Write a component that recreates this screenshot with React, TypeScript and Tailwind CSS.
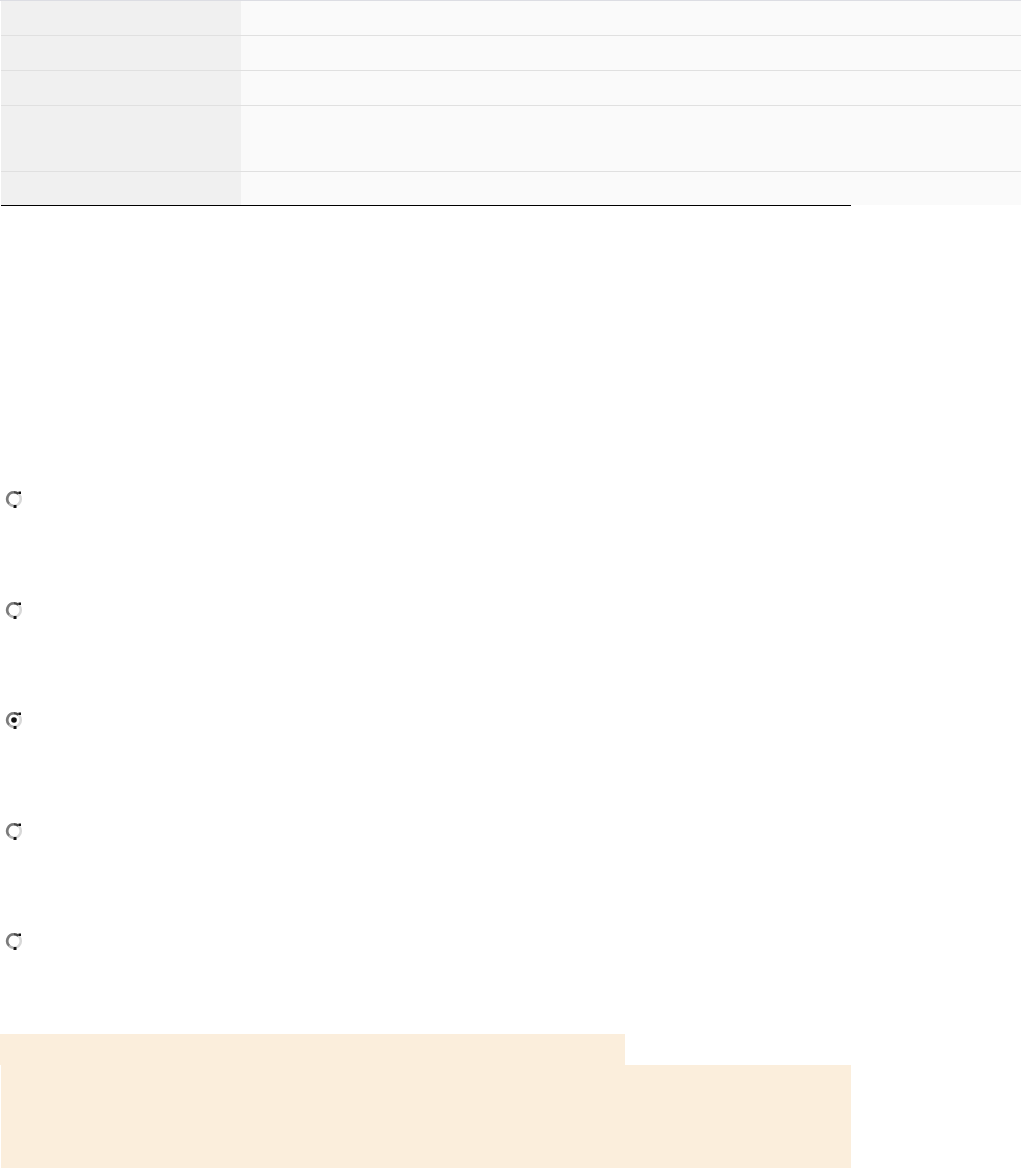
const rows = [35, 35, 35, 66, 33];

function Radio({ checked }: { checked?: boolean }) {
  return (
    <svg width={18} height={18} viewBox="0 0 18 18" className="block">
      <circle cx={9} cy={9} r={6.8} fill="#ffffff" stroke="#d8d8d8" strokeWidth={2.6} />
      <path d="M9 2.2 A6.8 6.8 0 0 0 4.2 13.8" fill="none" stroke="#7a7a7a" strokeWidth={2.6} />
      <path d="M9 2.2 A6.8 6.8 0 0 1 13.4 3.8" fill="none" stroke="#4a4a4a" strokeWidth={2.6} />
      <path d="M4.2 13.8 A6.8 6.8 0 0 0 8 15.7" fill="none" stroke="#b0b0b0" strokeWidth={2.6} />
      <rect x={13.5} y={1.5} width={2.5} height={2.5} fill="#111111" />
      <rect x={8.5} y={15} width={3} height={3} fill="#111111" />
      {checked && <circle cx={9} cy={9} r={2.8} fill="#111111" />}
    </svg>
  );
}

export default function App() {
  return (
    <div className="min-h-[1168px] bg-white font-['Liberation_Sans',sans-serif]">
      <div className="border-t border-[#dcdde3] pl-[1px]">
        {rows.map((h, i) => (
          <div
            key={i}
            className={`flex ${i < rows.length - 1 ? "border-b border-[#e0e0e0]" : ""}`}
            style={{ height: h }}
          >
            <div className="w-[240px] bg-[#f0f0f0]" />
            <div className="flex-1 bg-[#fafafa]" />
          </div>
        ))}
      </div>
      <div className="ml-[1px] h-[1px] w-[850px] bg-black" />

      <div className="pt-[284px] pl-[5px]">
        {[false, false, true, false, false].map((c, i) => (
          <div key={i} className="h-[110.5px]">
            <Radio checked={c} />
          </div>
        ))}
      </div>

      <div className="mt-[-8.5px] h-[31px] w-[625px] bg-[#fbeedc]" />
      <div className="ml-[1px] h-[104px] w-[850px] bg-[#fbeedc]" />
    </div>
  );
}
